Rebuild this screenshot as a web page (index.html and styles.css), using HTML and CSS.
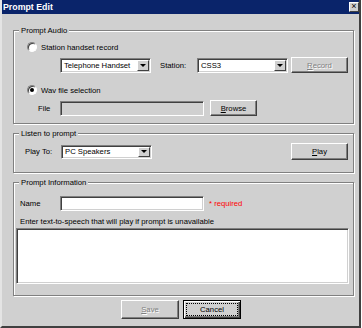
FILE: index.html
```html
<!DOCTYPE html>
<html>
<head>
    <title>Prompt Edit</title>
    <link rel="stylesheet" href="styles.css">
</head>
<body>
    <div class="window">
        <div class="titlebar">
            <span class="title">Prompt Edit</span>
            <span class="close">&#215;</span>
        </div>

        <div class="content">
            <fieldset class="group">
                <legend>Prompt Audio</legend>
                <div class="radio-row">
                    <span class="radio"></span>
                    <span>Station handset record</span>
                </div>
                <div class="row row-station">
                    <div class="combo"><span class="combo-text">Telephone Handset</span><span class="arrow"></span></div>
                    <span class="lbl lbl-station">Station:</span>
                    <div class="combo"><span class="combo-text">CSS3</span><span class="arrow"></span></div>
                    <button class="btn btn-record disabled"><u>R</u>ecord</button>
                </div>
                <div class="radio-row radio-wav">
                    <span class="radio checked"></span>
                    <span>Wav file selection</span>
                </div>
                <div class="row row-file">
                    <span class="lbl lbl-file">File</span>
                    <div class="field field-disabled"></div>
                    <button class="btn btn-browse"><u>B</u>rowse</button>
                </div>
            </fieldset>

            <fieldset class="group group-listen">
                <legend>Listen to prompt</legend>
                <div class="row row-play">
                    <span class="lbl lbl-play">Play To:</span>
                    <div class="combo combo-short"><span class="combo-text">PC Speakers</span><span class="arrow"></span></div>
                    <button class="btn btn-play"><u>P</u>lay</button>
                </div>
            </fieldset>

            <fieldset class="group group-info">
                <legend>Prompt Information</legend>
                <div class="row row-name">
                    <span class="lbl lbl-name">Name</span>
                    <div class="field"></div>
                    <span class="required">* required</span>
                </div>
                <div class="tts-label">Enter text-to-speech that will play if prompt is unavailable</div>
                <div class="field textarea"></div>
            </fieldset>

            <div class="actions">
                <button class="btn btn-action disabled"><u>S</u>ave</button>
                <button class="btn btn-action btn-default">Cancel</button>
            </div>
        </div>
    </div>
</body>
</html>
```

FILE: styles.css
```css
body {
    margin: 0;
    font-family: "Liberation Sans", Arial, sans-serif;
    font-size: 7.7px;
    color: #000;
    background: #fff;
}

.window {
    width: 361px;
    height: 328px;
    box-sizing: border-box;
    background: #d0d0d0;
    border-left: 2px solid #e4e4e4;
    border-right: 2px solid #404040;
    border-bottom: 2px solid #404040;
}

.titlebar {
    height: 14px;
    background: #0a246a;
    display: flex;
    align-items: center;
    justify-content: space-between;
    padding-left: 1px;
    color: white;
}

.title {
    font-weight: bold;
    font-size: 8.8px;
}

.close {
    width: 10px;
    height: 10px;
    box-sizing: border-box;
    background: #d0d0d0;
    border: 1px solid;
    border-color: #fff #404040 #404040 #fff;
    color: #000;
    font-size: 9px;
    line-height: 7px;
    text-align: center;
}

.content {
    padding-left: 11px;
}

.group {
    width: 341px;
    box-sizing: border-box;
    margin: 12px 0 0;
    padding: 0 0 7px;
    min-width: 0;
    border: 1px solid #808080;
    box-shadow: inset 1px 1px #fff, 1px 1px #fff;
}

.group legend {
    margin-left: 5px;
    padding: 0 2px;
    line-height: 9px;
    background: #d0d0d0;
}

.group-listen {
    margin-top: 5px;
    padding-bottom: 12px;
}

.group-info {
    margin-top: 5px;
    padding-bottom: 11px;
}

.radio-row {
    display: flex;
    align-items: center;
    height: 10px;
    margin: 7px 0 0 13px;
}

.radio-wav {
    margin-top: 12px;
}

.radio {
    width: 10px;
    height: 10px;
    box-sizing: border-box;
    margin-right: 4px;
    border-radius: 50%;
    background: #fff;
    border: 1px solid;
    border-color: #808080 #fff #fff #808080;
    box-shadow: inset 1px 1px #404040;
    display: flex;
    align-items: center;
    justify-content: center;
}

.radio.checked::after {
    content: "";
    width: 4px;
    height: 4px;
    border-radius: 50%;
    background: #000;
}

.row {
    display: flex;
    align-items: center;
}

.row-station {
    height: 16px;
    margin: 5px 0 0 46px;
}

.row-file {
    height: 16px;
    margin: 5px 0 0 24px;
}

.row-play {
    height: 17px;
    margin: 5px 5px 0 11px;
}

.row-name {
    height: 15px;
    margin: 9px 0 0 6px;
}

.lbl-station {
    margin-left: 9px;
    width: 37px;
}

.lbl-file {
    width: 22px;
}

.lbl-play {
    width: 36px;
}

.lbl-name {
    width: 40px;
}

.combo,
.field {
    box-sizing: border-box;
    background: #fff;
    border: 1px solid;
    border-color: #808080 #fff #fff #808080;
    box-shadow: inset 1px 1px #404040, inset -1px -1px #d0d0d0;
}

.combo {
    width: 91px;
    height: 15px;
    display: flex;
    align-items: stretch;
    padding: 1px;
}

.combo-short {
    height: 14px;
}

.combo-text {
    flex: 1;
    padding-left: 2px;
    display: flex;
    align-items: center;
}

.arrow {
    width: 12px;
    box-sizing: border-box;
    background: #d0d0d0;
    border: 1px solid;
    border-color: #fff #404040 #404040 #fff;
    display: flex;
    align-items: center;
    justify-content: center;
}

.arrow::after {
    content: "";
    border-left: 3px solid transparent;
    border-right: 3px solid transparent;
    border-top: 3px solid #000;
}

.field {
    width: 144px;
    height: 15px;
}

.field-disabled {
    background: #d0d0d0;
}

.textarea {
    width: 333px;
    height: 56px;
    margin: 1px 0 0 2px;
}

.required {
    margin-left: 5px;
    color: #ff0000;
}

.tts-label {
    height: 10px;
    line-height: 10px;
    margin: 6px 0 0 6px;
}

.btn {
    box-sizing: border-box;
    padding: 0;
    font: inherit;
    color: #000;
    background: #d0d0d0;
    border: 1px solid;
    border-color: #fff #404040 #404040 #fff;
    box-shadow: inset -1px -1px #808080;
}

.btn.disabled {
    color: #808080;
    text-shadow: 1px 1px #fff;
}

.btn-record {
    margin-left: 3px;
    width: 57px;
    height: 16px;
}

.btn-browse {
    margin-left: 6px;
    width: 47px;
    height: 16px;
}

.btn-play {
    margin-left: auto;
    width: 57px;
    height: 17px;
}

.actions {
    display: flex;
    gap: 4px;
    margin: 4px 0 0 108px;
}

.btn-action {
    width: 58px;
    height: 19px;
}

.btn-default {
    border-color: #000;
    box-shadow: inset 1px 1px #fff, inset -1px -1px #404040, inset -2px -2px #808080;
    outline: 1px dotted #000;
    outline-offset: -4px;
}
```
